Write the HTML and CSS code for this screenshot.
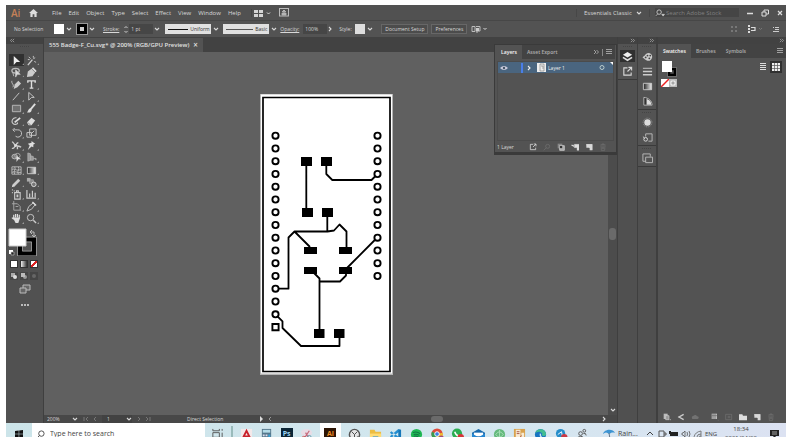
FILE: index.html
```html
<!DOCTYPE html>
<html lang="en">
<head>
<meta charset="utf-8">
<title>555 Badge-F_Cu.svg</title>
<link rel="stylesheet" href="styles.css">
</head>
<body>
<svg class="defs" aria-hidden="true">
  <symbol id="chev" viewBox="0 0 6 6"><path d="M1 2l2 2 2-2" fill="none" stroke="currentColor" stroke-width="1.1"/></symbol>
  <symbol id="dbl" viewBox="0 0 6 6"><path d="M1 1l2 2-2 2M3.500 1l2 2-2 2" fill="none" stroke="currentColor" stroke-width=".9"/></symbol>
  <symbol id="menu" viewBox="0 0 6 6"><path d="M0 .5h6M0 2.500h6M0 4.500h6" stroke="currentColor" stroke-width=".9"/></symbol>
  <symbol id="export" viewBox="0 0 12 12"><path d="M6 2H2v8h8V7M7 1.500h3.500V5M10.500 1.500L6 6" fill="none" stroke="currentColor" stroke-width="1.200"/></symbol>
  <symbol id="bin" viewBox="0 0 12 12"><path d="M2 3h8M4.500 3V1.500h3V3M3 4l.5 7h5L9 4M5 5v4M7 5v4" fill="none" stroke="currentColor"/></symbol>
  <symbol id="page" viewBox="0 0 12 12"><path d="M2 2h9v9L2 3z" fill="currentColor"/><path d="M2 2h9v9H7V7H2z" fill="currentColor"/></symbol>
</svg>
<div class="app">
  <header class="menubar">
    <span class="logo">Ai</span>
    <button class="home" aria-label="Home"><svg viewBox="0 0 10 9"><path d="M5 0l5 4.500H8.500V9H6V6H4v3H1.500V4.500H0z" fill="#ddd"/></svg></button>
    <nav class="menus"><button>File</button><button>Edit</button><button>Object</button><button>Type</button><button>Select</button><button>Effect</button><button>View</button><button>Window</button><button>Help</button></nav>
    <button class="arrange" aria-label="Arrange documents"><svg viewBox="0 0 18 8"><path d="M0 1h4v3H0zM0 5h4v3H0zM5 1h4v3H5zM5 5h4v3H5z" fill="#d5d5d5"/><path d="M13 3.500l1.500 1.500L16 3.500" fill="none" stroke="#ddd"/></svg></button>
    <button class="gpu" aria-label="GPU preview"><svg viewBox="0 0 10 9"><rect x=".5" y=".5" width="9" height="7.500" fill="none" stroke="#bbb"/><path d="M5 2v5M3 4l2-2 2 2M3 5h4v2H3z" stroke="#ccc" stroke-width=".7" fill="#999"/></svg></button>
    <label class="drop space"><select aria-label="Workspace"><option>Essentials Classic</option></select><svg class="i6"><use href="#chev"/></svg></label>
    <label class="search"><svg viewBox="0 0 10 9"><circle cx="4" cy="3.500" r="2.500" fill="none" stroke="#ccc"/><path d="M2.500 5.500L0 8M7 6h3L8.500 8z" stroke="#ccc" stroke-width=".8" fill="#ccc"/></svg><input type="text" placeholder="Search Adobe Stock" aria-label="Search Adobe Stock"></label>
    <div class="winctl">
      <button aria-label="Minimize"><svg viewBox="0 0 8 8"><path d="M1 4.500h6" stroke="#ddd" stroke-width="1.500"/></svg></button>
      <button aria-label="Restore"><svg viewBox="0 0 8 8"><path d="M1 3h4v4H1zM3 3V1h4.500v4H5" fill="none" stroke="#ddd"/></svg></button>
      <button aria-label="Close"><svg viewBox="0 0 8 8"><path d="M2 2l4 4M6 2L2 6" stroke="#ddd" stroke-width="1.200"/></svg></button>
    </div>
  </header>

  <section class="control">
    <span class="nosel">No Selection</span>
    <button class="sw" aria-label="Fill"><i class="white"></i><svg class="i6"><use href="#chev"/></svg></button>
    <button class="sw strk" aria-label="Stroke colour"><i class="ring"></i><svg class="i6"><use href="#chev"/></svg></button>
    <label class="ul" for="weight">Stroke:</label>
    <span class="weight"><svg viewBox="0 0 6 9"><path d="M1.500 3L3 1.500 4.500 3M1.500 6L3 7.500 4.500 6" fill="none" stroke="#ccc"/></svg><select id="weight" class="dark"><option>1 pt</option></select><svg class="i6"><use href="#chev"/></svg></span>
    <label class="profile"><span class="sample"><b></b><select aria-label="Width profile"><option>Uniform</option></select></span><svg class="i6"><use href="#chev"/></svg></label>
    <label class="profile thin"><span class="sample"><b></b><select aria-label="Brush"><option>Basic</option></select></span><svg class="i6"><use href="#chev"/></svg></label>
    <label class="ul op" for="opacity">Opacity:</label>
    <span class="opacity"><input id="opacity" class="dark" type="text" value="100%"><svg class="i6 side"><use href="#chev"/></svg></span>
    <span class="style">Style:</span>
    <button class="sw sty" aria-label="Graphic style"><i class="pale"></i><svg class="i6"><use href="#chev"/></svg></button>
    <button class="btn first">Document Setup</button>
    <button class="btn">Preferences</button>
    <button class="align" aria-label="Align to"><svg viewBox="0 0 17 9"><path d="M1 1.500h3v5H1zM5 1.500h4V6H5M5 7h2" fill="none" stroke="#bbb"/><path d="M5 3h3v3H5z" fill="#ccc"/><path d="M12.500 3l1.500 1.500L15.500 3" fill="none" stroke="#ddd"/></svg></button>
    <div class="ctlend">
      <svg class="w8" viewBox="0 0 8 8"><path d="M1 1h2v2H1zM5 1h2v2H5zM1 5h2v2H1zM5 5h2v2H5z" fill="#777"/></svg>
      <svg class="w16" viewBox="0 0 16 8"><path d="M1 0h2v2H1zM1 3h2v2H1zM1 6h2v2H1z" fill="#ddd"/><path d="M4 2.500h4v3H4" fill="none" stroke="#ddd" stroke-width="1.200"/><path d="M12 3l1.500 1.500L15 3" fill="none" stroke="#777"/></svg>
      <svg class="w8" viewBox="0 0 8 8"><path d="M1 2.500h1M3 2.500h4M3 4.500h4M1 6.500h6" stroke="#ccc"/></svg>
    </div>
  </section>

  <main class="work">
    <aside class="tools">
      <div class="strip"><svg class="i6"><use href="#dbl"/></svg></div>
      <div class="grip"></div>
      <div class="toolgrid">
        <button class="on" aria-label="Selection"><svg viewBox="0 0 12 12"><path d="M3 1l7 6.500H6L3 11z" fill="#eee"/></svg></button>
        <button aria-label="Magic wand"><svg viewBox="0 0 12 12"><path d="M2 11l5-6" stroke="#ccc" stroke-width="1.500"/><path d="M3 2l2 2M8 1v2M10 3l-2 1M9 7l2 1M2 5h2" stroke="#ccc"/></svg></button>
        <button aria-label="Lasso"><svg viewBox="0 0 12 12"><ellipse cx="5" cy="4" rx="4" ry="2.500" fill="none" stroke="#bbb" stroke-width="1.500"/><path d="M5 3l5 5H7l-2 3zM2 6l1 4" fill="#ddd" stroke="#bbb"/></svg></button>
        <button aria-label="Pen"><svg viewBox="0 0 12 12"><path d="M1 11l1-6 4-3 4 4-3 4z" fill="#ccc"/><path d="M7 1l4 4" stroke="#ddd" stroke-width="2"/></svg></button>
        <button aria-label="Curvature"><svg viewBox="0 0 12 12"><path d="M3 11l1-5 4-4 3 3-4 4z" fill="#ccc"/><path d="M1 2c-1 3 3 4 1 7" fill="none" stroke="#ccc"/></svg></button>
        <button aria-label="Type"><svg viewBox="0 0 12 12"><path d="M2 4V2h8v2M6 2v8M4 10h4" fill="none" stroke="#ddd" stroke-width="1.500"/></svg></button>
        <button aria-label="Line"><svg viewBox="0 0 12 12"><path d="M2 10l7-8" stroke="#ccc"/></svg></button>
        <button aria-label="Direct selection"><svg viewBox="0 0 12 12"><path d="M3 1.500l6 5.500H6l-3 3z" fill="none" stroke="#ccc"/></svg></button>
        <button aria-label="Rectangle"><svg viewBox="0 0 12 12"><path d="M1.500 2.500h9v7h-9z" fill="#707070" stroke="#bbb"/></svg></button>
        <button aria-label="Paintbrush"><svg viewBox="0 0 12 12"><path d="M10 1L5 7" stroke="#ddd" stroke-width="2"/><path d="M5 6c-3 0-2 3-4 4 2 1 6 0 5-3z" fill="#ddd"/></svg></button>
        <button aria-label="Shaper"><svg viewBox="0 0 12 12"><path d="M6 2C2 1 0 6 2 8s6 1 5-1" fill="none" stroke="#ccc" stroke-width="1.200"/><path d="M4 7l6-5" stroke="#ddd" stroke-width="2"/></svg></button>
        <button aria-label="Eraser"><svg viewBox="0 0 12 12"><path d="M1 7l5-5 4 3-4 5H3z" fill="#ddd"/><path d="M2 7l3 3" stroke="#777"/></svg></button>
        <button aria-label="Rotate"><svg viewBox="0 0 12 12"><path d="M3 2h4a4 4 0 1 1-2 7M4 0L2 2l2 2" fill="none" stroke="#ccc"/></svg></button>
        <button aria-label="Scale"><svg viewBox="0 0 12 12"><path d="M4 1h7v7H4zM1 5h5v5H1zM6 6l3-3" fill="none" stroke="#ccc"/></svg></button>
        <button aria-label="Width"><svg viewBox="0 0 12 12"><path d="M1 2c2 0 2 3 4 4s4 0 6 2M1 9c2 1 3-2 4-3s1-3 3-3M7 6v4" fill="none" stroke="#ccc" stroke-width="1.500"/><circle cx="5" cy="6" r="1.500" fill="#ddd"/></svg></button>
        <button aria-label="Puppet warp"><svg viewBox="0 0 12 12"><path d="M6 1l4 3-2 1v3L6 7l-4 4 2-5-2-2 4-1z" fill="#ddd"/></svg></button>
        <button aria-label="Shape builder"><svg viewBox="0 0 12 12"><ellipse cx="4" cy="5" rx="3" ry="2.500" fill="#777" stroke="#bbb"/><ellipse cx="7" cy="4" rx="3" ry="2.500" fill="none" stroke="#aaa"/><path d="M6 4l5 4H8l-2 3z" fill="#ddd"/></svg></button>
        <button aria-label="Perspective grid"><svg viewBox="0 0 12 12"><path d="M2 1l3 1v7l-3 1zM5 4l3 1v4H5M8 7h3v2" fill="#999" stroke="#bbb" stroke-width=".7"/></svg></button>
        <button aria-label="Mesh"><svg viewBox="0 0 12 12"><path d="M1 2h10v8H1zM1 5c3-2 4 2 10 0M1 8c4-2 5 1 10 0M4 2c2 3-2 4 0 8M8 2c2 3-2 4 0 8" fill="none" stroke="#bbb"/></svg></button>
        <button aria-label="Gradient"><svg viewBox="0 0 12 12"><defs><linearGradient id="gr"><stop stop-color="#222"/><stop offset="1" stop-color="#eee"/></linearGradient></defs><path d="M1.500 2.500h9v7h-9z" fill="url(#gr)" stroke="#ccc"/></svg></button>
        <button aria-label="Eyedropper"><svg viewBox="0 0 12 12"><path d="M2 10l7-7" stroke="#ccc" stroke-width="3"/><path d="M1 11l2-2" stroke="#ddd"/></svg></button>
        <button aria-label="Blend"><svg viewBox="0 0 12 12"><path d="M1 1h4v4H1z" fill="#aaa"/><path d="M4 3h4v4H4z" fill="#888" stroke="#bbb" stroke-width=".6"/><circle cx="8.500" cy="8" r="2.500" fill="#777" stroke="#ddd"/></svg></button>
        <button aria-label="Symbol sprayer"><svg viewBox="0 0 12 12"><path d="M4 4h6v7H4zM6 4V2h2v2M1 1h1M1 4h1M3 2h1" fill="none" stroke="#ccc" stroke-width="1.200"/><path d="M6 6h2v3H6z" fill="#ccc"/></svg></button>
        <button aria-label="Graph"><svg viewBox="0 0 12 12"><path d="M1 1v9h10M4 9V5M7 9V2M10 9V4" fill="none" stroke="#ccc" stroke-width="1.300"/></svg></button>
        <button aria-label="Artboard"><svg viewBox="0 0 12 12"><path d="M3 0v10h8M1 3h6l3 3v4M5 6h3" fill="none" stroke="#aaa"/></svg></button>
        <button aria-label="Slice"><svg viewBox="0 0 12 12"><path d="M1 11l2-5 5-4 2 2-4 5z" fill="none" stroke="#ccc"/><path d="M7 1l4 4" stroke="#ddd" stroke-width="1.500"/></svg></button>
        <button aria-label="Hand"><svg viewBox="0 0 12 12"><path d="M3 6V2M5 5V1M7 5V1M9 6V2M1 5l2 2" stroke="#ddd" stroke-width="1.300"/><path d="M2 5h8L8 11H5z" fill="#ddd"/></svg></button>
        <button aria-label="Zoom"><svg viewBox="0 0 12 12"><circle cx="5" cy="5" r="3.500" fill="none" stroke="#ccc"/><path d="M8 8l3 3" stroke="#ccc" stroke-width="1.500"/></svg></button>
      </div>
      <svg class="fills" viewBox="0 0 30 28"><rect x="12" y="11.500" width="14" height="14" fill="none" stroke="#000" stroke-width="4"/><path d="M9.500 9h19v19h-19zM14.500 14h9v9h-9z" fill="none" stroke="#aaa" stroke-width=".7"/><path d="M1 1h17v17H1z" fill="#fff" stroke="#ccc"/><path d="M22 4h4v4M24 2l-2 2 2 2M24 7l2 2 2-2" fill="none" stroke="#bbb"/><path d="M1 22h4v4H1z" fill="#fff"/><path d="M3 24h3v3H3z" fill="#222" stroke="#ccc" stroke-width=".6"/></svg>
      <div class="modes"><i class="solid"></i><i class="grad"></i><i class="none"></i></div>
      <div class="modes draw"><svg viewBox="0 0 8 8"><path d="M1 1h4v4H1z" fill="#aaa"/><circle cx="5" cy="5" r="2" fill="#ddd"/></svg><svg viewBox="0 0 8 8"><circle cx="5" cy="5" r="2" fill="#999"/><path d="M1 1h4v4H1z" fill="#bbb"/></svg><svg viewBox="0 0 8 8"><circle cx="4" cy="4" r="2" fill="#666"/></svg></div>
      <svg class="screen" viewBox="0 0 12 10"><path d="M4 1h7v5H4z" fill="#666" stroke="#bbb"/><path d="M1 4h6v5H1z" fill="#666" stroke="#bbb"/></svg>
      <div class="dots"><i></i><i></i><i></i></div>
    </aside>

    <section class="doc">
      <div class="tabs"><button class="tab">555 Badge-F_Cu.svg* @ 200% (RGB/GPU Preview) <span>×</span></button></div>
      <div class="canvas">
        <div class="board">
          <svg class="art" viewBox="260 94 133 281">
            <defs><circle id="pin" r="3.100" fill="#fff" stroke="#000" stroke-width="1.900"/></defs>
            <path d="M260 94h133v281H260z" fill="#b5b5b5"/><path d="M261 94.500h131v279H261z" fill="#fff"/>
            <path d="M263 97.500h127v274H263z" fill="#fff" stroke="#000" stroke-width="1.700"/>
            <g fill="none" stroke="#000" stroke-width="1.800" stroke-linejoin="round">
              <path d="M306.300 161v51M326.300 162v12l6 6H371.500l6-6"/>
              <path d="M327.300 212v18.500M275.500 288.700h13V237.500l6-6h33l6.500-1 5.500-6 7 7V250M294.500 231.500L310 247"/>
              <path d="M377.300 237.500L346 269M311 270l8.500 8.500V332M319.500 281.500H340l6-6V270"/>
              <path d="M275.500 314.300l7 7V328l18.500 18H339.500V334"/>
            </g>
            <path d="M301 157h11v9h-11zM321 157h11v9h-11zM302 208h11v9h-11zM322 208h11v9h-11zM304 247h13v7h-13zM339 247h13v7h-13zM304 267h13v7h-13zM339 267h13v7h-13zM314 329h10.500v9h-10.500zM334 329h10.500v9h-10.500z"/>
            <use href="#pin" x="275.500" y="135.700"/><use href="#pin" x="275.500" y="148.500"/><use href="#pin" x="275.500" y="161.200"/><use href="#pin" x="275.500" y="174"/><use href="#pin" x="275.500" y="186.700"/><use href="#pin" x="275.500" y="199.500"/><use href="#pin" x="275.500" y="212.200"/><use href="#pin" x="275.500" y="225"/><use href="#pin" x="275.500" y="237.700"/><use href="#pin" x="275.500" y="250.500"/><use href="#pin" x="275.500" y="263.200"/><use href="#pin" x="275.500" y="276"/><use href="#pin" x="275.500" y="288.700"/><use href="#pin" x="275.500" y="301.500"/><use href="#pin" x="275.500" y="314.300"/>
            <path d="M272.400 324h6.200v6.200h-6.200z" fill="#fff" stroke="#000" stroke-width="1.900"/>
            <use href="#pin" x="377.500" y="135.700"/><use href="#pin" x="377.500" y="148.500"/><use href="#pin" x="377.500" y="161.200"/><use href="#pin" x="377.500" y="174"/><use href="#pin" x="377.500" y="186.700"/><use href="#pin" x="377.500" y="199.500"/><use href="#pin" x="377.500" y="212.200"/><use href="#pin" x="377.500" y="225"/><use href="#pin" x="377.500" y="237.700"/><use href="#pin" x="377.500" y="250.500"/><use href="#pin" x="377.500" y="263.200"/><use href="#pin" x="377.500" y="276"/>
          </svg>
        </div>
        <div class="vscroll"><i></i><svg class="i6"><use href="#chev"/></svg></div>
      </div>
      <footer class="status">
        <label class="drop zoom"><select aria-label="Zoom level"><option>200%</option></select><svg class="i6"><use href="#chev"/></svg></label>
        <svg class="nav" viewBox="0 0 18 6"><path d="M3 1v4M7 1L5 3l2 2M15 1l-2 2 2 2" stroke="#777" fill="none"/></svg>
        <label class="drop num"><select aria-label="Artboard"><option>1</option></select><svg class="i6"><use href="#chev"/></svg></label>
        <svg class="nav" viewBox="0 0 18 6"><path d="M3 1l2 2-2 2M11 1l2 2-2 2M15 1v4" stroke="#777" fill="none"/></svg>
        <span class="current">Direct Selection</span>
        <svg class="play" viewBox="0 0 14 6"><path d="M1 0l3 3-3 3z" fill="#ddd"/><path d="M12 1l-2 2 2 2" stroke="#999" fill="none"/></svg>
        <div class="hscroll"><i></i></div>
        <svg class="i6 side"><use href="#chev"/></svg>
      </footer>

      <section class="layers">
        <div class="ptabs"><button class="act">Layers</button><button>Asset Export</button><span class="ends"><svg class="i6"><use href="#dbl"/></svg><b></b><svg class="i6"><use href="#menu"/></svg></span></div>
        <div class="list"><div class="layer">
          <svg class="eye" viewBox="0 0 8 6"><path d="M0 3q4-4 8 0-4 4-8 0z" fill="#ccd"/><circle cx="4" cy="3" r="1.200" fill="#456"/></svg>
          <b></b><svg class="i6 side"><use href="#chev"/></svg>
          <svg class="thumb" viewBox="0 0 9 9"><path d="M0 0h9v9H0z" fill="#eee"/><path d="M3 1h4v7H3zM4 3h2v3" fill="none" stroke="#888" stroke-width=".7"/></svg>
          <span>Layer 1</span>
          <svg class="target" viewBox="0 0 15 11"><circle cx="4" cy="5.500" r="2" fill="none" stroke="#bcc"/><path d="M12 0h3v3z" fill="#fff"/></svg>
        </div></div>
        <div class="lfoot"><span>1 Layer</span>
          <svg><use href="#export"/></svg>
          <svg class="dim" viewBox="0 0 12 12"><circle cx="7" cy="5" r="3" fill="none" stroke="currentColor"/><path d="M5 7l-4 4" stroke="currentColor"/></svg>
          <svg viewBox="0 0 12 12"><path d="M1 1h7v7H1z" fill="#888"/><path d="M4 4h7v7H4z" fill="#aaa" stroke="#ddd"/><circle cx="6" cy="6" r="2" fill="#333"/></svg>
          <svg viewBox="0 0 12 12"><path d="M0 3h4v3M5 2h7v9H9V7H5z" fill="#ddd" stroke="#ddd" stroke-width=".5"/></svg>
          <svg><use href="#page"/></svg>
          <svg class="dim"><use href="#bin"/></svg>
        </div>
      </section>
    </section>

    <aside class="rail one">
      <div class="strip"><svg class="i6"><use href="#dbl"/></svg></div>
      <div class="group"><div class="grip"></div>
        <button class="on" aria-label="Layers"><svg viewBox="0 0 12 12"><path d="M6 1l5 3-5 3-5-3z" fill="#eee"/><path d="M1 7l5 3 5-3" fill="none" stroke="#ddd" stroke-width="1.800"/></svg></button>
        <button aria-label="Asset Export"><svg><use href="#export"/></svg></button></div>
    </aside>
    <aside class="rail two">
      <div class="strip"><svg class="i6"><use href="#dbl"/></svg></div>
      <div class="group"><div class="grip"></div>
        <button aria-label="Color"><svg viewBox="0 0 12 12"><path d="M3 5C5 0 12 2 11 7s-6 4-8 2-4-1 0-4z" fill="#ccc"/><circle cx="6" cy="5" r="1" fill="#444"/><circle cx="9" cy="5" r="1" fill="#444"/><circle cx="8" cy="8" r="1" fill="#444"/><circle cx="4" cy="7" r="1" fill="#444"/></svg></button>
        <button aria-label="Stroke"><svg viewBox="0 0 12 12"><path d="M1 2.500h10" stroke="#ccc"/><path d="M1 6h10M1 9.500h10" stroke="#ccc" stroke-width="1.500"/></svg></button>
        <button aria-label="Gradient"><svg viewBox="0 0 12 12"><path d="M1.500 2.500h9v7h-9z" fill="url(#gr)" stroke="#ccc"/></svg></button>
        <button aria-label="Transparency"><svg viewBox="0 0 12 12"><path d="M2 1.500v8.500h9C11 5 7 2 2 1.500z" fill="#333" stroke="#bbb"/><path d="M5 3c4 2 5 3 5 6.500H5z" fill="#ddd"/></svg></button></div>
      <div class="group"><div class="grip"></div>
        <button aria-label="Appearance"><svg viewBox="0 0 12 12"><circle cx="6" cy="6" r="3.500" fill="#ddd"/><circle cx="6" cy="6" r="4.800" fill="none" stroke="#999" stroke-dasharray="1 1"/></svg></button>
        <button aria-label="Graphic Styles"><svg viewBox="0 0 12 12"><path d="M4 5V2h7v8H7" fill="none" stroke="#bbb"/><circle cx="4" cy="8" r="2" fill="none" stroke="#ddd"/><path d="M1 5l2 2" stroke="#ddd"/></svg></button></div>
      <div class="group"><div class="grip"></div>
        <button aria-label="Artboards"><svg viewBox="0 0 12 12"><path d="M4 9H1V1h8v3M4 4.500h7.500v6H4z" fill="none" stroke="#bbb"/></svg></button></div>
    </aside>
    <aside class="panel">
      <div class="strip"><svg class="i6"><use href="#dbl"/></svg></div>
      <div class="ptabs"><button class="act">Swatches</button><button>Brushes</button><button>Symbols</button><span class="ends"><svg class="i6"><use href="#menu"/></svg></span></div>
      <div class="swbody">
        <svg class="pair" viewBox="0 0 15 16"><path d="M7 8h6v6H7z" fill="none" stroke="#000" stroke-width="2.500"/><path d="M5.500 6.500h9v9h-9z" fill="none" stroke="#999" stroke-width=".5"/><path d="M0 0h10v11H0z" fill="#fff"/></svg>
        <div class="views"><button aria-label="List view"><svg viewBox="0 0 8 8"><path d="M1 .5h6M1 2.500h6M1 4.500h6M1 6.500h6" stroke="#ddd"/></svg></button><button class="on" aria-label="Grid view"><svg viewBox="0 0 8 8"><path d="M0 0h8v8H0z" fill="#eee"/><path d="M2.500 0v8M5.500 0v8M0 2.500h8M0 5.500h8" stroke="#555" stroke-width=".7"/></svg></button></div>
      </div>
      <svg class="chips" viewBox="0 0 14 7"><path d="M0 0h7v7H0z" fill="#fff"/><path d="M0 7l7-7" stroke="#e22" stroke-width="1.300"/><path d="M7 0h7v7H7z" fill="#bbb"/><path d="M8 3.500h5M10.500 1v5" stroke="#777" stroke-dasharray="1 1"/><circle cx="10.500" cy="3.500" r="2" fill="none" stroke="#eee"/></svg>
      <div class="pfoot">
        <svg viewBox="0 0 12 12"><path d="M1 1h6v8H1z" fill="#bbb"/><path d="M4 4h5v6H4zM10 10h2" fill="#999" stroke="#ccc"/></svg>
        <svg viewBox="0 0 12 12"><path d="M10 2L3 6l7 4M2 6h3" fill="none" stroke="#ccc" stroke-width="2"/></svg>
        <svg class="dim wide" viewBox="0 0 12 12"><path d="M2 9a3 3 0 0 1 2-5 3 3 0 0 1 5 1 2 2 0 0 1 1 4z" fill="currentColor"/></svg>
        <svg viewBox="0 0 12 12"><path d="M1 1h8v8H1z" fill="#bbb"/><path d="M3 1v8M6 1v8M1 4h8M10 11h2" stroke="#666"/></svg>
        <svg class="dim" viewBox="0 0 12 12"><path d="M1 2h9v8H1zM4 5h4M4 7h4" fill="none" stroke="currentColor"/></svg>
        <svg viewBox="0 0 12 12"><path d="M0 2h5l1 2h6v7H0z" fill="#ddd"/></svg>
        <svg><use href="#page"/></svg>
        <svg class="dim"><use href="#bin"/></svg>
      </div>
    </aside>
  </main>

  <footer class="taskbar"><div class="taskrow">
    <button class="start" aria-label="Start"><svg viewBox="0 0 8 8"><path d="M0 1l3.700-.5v3.300H0zM4.200.4L8 0v3.800H4.200zM0 4.300h3.700v3.300L0 7.100zM4.200 4.300H8V8l-3.800-.5z" fill="#111"/></svg></button>
    <label class="find"><svg viewBox="0 0 10 10"><circle cx="6" cy="4" r="3" fill="none" stroke="#444"/><path d="M4 6L1 9" stroke="#444"/></svg><input type="text" placeholder="Type here to search" aria-label="Type here to search"></label>
    <div class="pins">
      <button aria-label="Task view"><svg viewBox="0 0 14 14"><path d="M2 1v2h7V1M2 5h7v5H2zM2 13v-1h7v1M12 1v2M12 5v8" fill="none" stroke="#555"/></svg></button>
      <b class="sep"></b>
      <button aria-label="AutoCAD"><svg viewBox="0 0 14 14"><path d="M1 1h12v12H1z" fill="#f3e9ea"/><path d="M3 11L7 3l4 8M5 9h4" fill="none" stroke="#c8202a" stroke-width="2"/></svg></button>
      <button aria-label="Calculator"><svg viewBox="0 0 14 14"><path d="M2 1h10v13H2z" fill="#55788c"/><path d="M3 2h8v3H3z" fill="#b4dce8"/><path d="M3 7h2v2H3zM6 7h2v2H6zM3 10h2v2H3zM6 10h2v2H6z" fill="#dde"/><path d="M9 7h2v6H9z" fill="#38a4dc"/></svg></button>
      <button aria-label="Photoshop" class="ps">Ps</button>
      <button aria-label="Snip"><svg viewBox="0 0 14 14"><ellipse cx="7" cy="5" rx="6" ry="4" fill="#e8dce5"/><path d="M4 12l6-9M10 12L6 5" stroke="#c7687b" stroke-width="1.300"/><circle cx="4" cy="11" r="2" fill="none" stroke="#c55"/><circle cx="10" cy="10" r="2" fill="none" stroke="#69a"/></svg></button>
      <button aria-label="Illustrator" class="ai"><span>Ai</span></button>
      <button aria-label="Clock"><svg viewBox="0 0 14 14"><circle cx="7" cy="7" r="5.500" fill="#e5e5e5" stroke="#555" stroke-width="1.500"/><path d="M4 4l3 3 3-3M7 7v3" fill="none" stroke="#444"/><path d="M10 9l4 4" stroke="#777" stroke-width="2"/></svg></button>
      <button aria-label="Explorer"><svg viewBox="0 0 14 14"><path d="M1 2h5l1 2h6v9H1z" fill="#edbd41"/><path d="M1 6h12v6H1z" fill="#ffdc75"/><path d="M4 9h6v4H4z" fill="#4599d5"/></svg></button>
      <button aria-label="VS Code"><svg viewBox="0 0 14 14"><path d="M10 1L1 9l1.500 1.500L11 4zM1 5l1.500-1.500L11 10l-1 3z" fill="#248ed1"/><path d="M10 1l3 1v10l-3 1z" fill="#1577b9"/></svg></button>
      <button aria-label="Spotify"><svg viewBox="0 0 14 14"><circle cx="7" cy="7" r="6" fill="#20b954"/><path d="M3 5q4-2 8 1M4 7q3-1 6 1M4 9q3-1 5 1" fill="none" stroke="#174" stroke-width="1.100"/></svg></button>
      <button aria-label="Chrome"><svg viewBox="0 0 14 14"><circle cx="6.500" cy="6.500" r="6" fill="#dd4b3c"/><path d="M6.500 6.500L1 4a6 6 0 0 0 5 8.500z" fill="#369b52"/><path d="M6.500 6.500L6 12.500A6 6 0 0 0 12.500 5z" fill="#efbe31"/><circle cx="6.500" cy="6.500" r="2.500" fill="#3f7de0" stroke="#fff"/><circle cx="11" cy="11" r="3" fill="#a74a7b"/></svg></button>
      <button aria-label="WhatsApp"><svg viewBox="0 0 14 14"><circle cx="6.500" cy="6" r="5.500" fill="#2bae52"/><path d="M4 4q1 4 5 5" stroke="#fff" stroke-width="1.500" fill="none"/><circle cx="10.500" cy="10" r="3.500" fill="#d53639"/></svg></button>
      <button aria-label="Mail"><svg viewBox="0 0 14 14"><path d="M0 5l7-4 7 4v8H0z" fill="#1769ad"/><path d="M2 5h10v4H2z" fill="#fff"/><path d="M0 6l7 4 7-4v7H0z" fill="#2687d1"/></svg></button>
      <button aria-label="Atom"><svg viewBox="0 0 14 14"><circle cx="7" cy="7" r="6" fill="#65ba7d"/><path d="M3 7q4-6 8 0-4 6-8 0M7 2v10" fill="none" stroke="#a9dfb8"/></svg></button>
      <button aria-label="Files"><svg viewBox="0 0 14 14"><path d="M1 1h12v13H1z" fill="#d9a24d"/><path d="M3 2h5v10H3zM9 5h3v8H9z" fill="#f7ead4"/><path d="M4 4h3M4 6h3M9 8l-3 5" stroke="#a54"/></svg></button>
      <button aria-label="Edge"><svg viewBox="0 0 14 14"><circle cx="7" cy="7" r="6" fill="#1674c1"/><path d="M1 6C3-1 13 0 13 7c-1 3-6 2-4-1-3-3-6-2-8 0z" fill="#43bd91"/><path d="M7 6q-1 5 5 5" fill="none" stroke="#cce8f3" stroke-width="1.500"/></svg></button>
      <button aria-label="Messages"><svg viewBox="0 0 14 14"><circle cx="6" cy="6" r="5" fill="#258dca"/><path d="M3 7l4-3 1 5" fill="none" stroke="#fff"/><circle cx="10" cy="10" r="3.500" fill="#c93a46"/></svg></button>
      <button aria-label="People"><svg viewBox="0 0 14 14"><circle cx="6" cy="6" r="2" fill="none" stroke="#555"/><path d="M2 13q0-4 4-4t3 4" fill="none" stroke="#555"/><circle cx="10" cy="3" r="1.500" fill="none" stroke="#555"/><path d="M9 6q3-1 3 2" fill="none" stroke="#555"/></svg></button>
    </div>
    <div class="tray">
      <svg class="rain" viewBox="0 0 12 12"><path d="M0 6C1 1 10 0 12 5 9 4 8 5 6 6 4 4 2 4 0 6z" fill="#3c94d2"/><path d="M6 5l1 6" stroke="#678"/></svg>
      <span class="rtext">Rain...</span>
      <svg viewBox="0 0 10 10"><path d="M2 6l3-3 3 3" fill="none" stroke="#444"/></svg>
      <svg viewBox="0 0 10 10"><path d="M2 2h5v6H2zM7 4h2v2H7" fill="none" stroke="#555"/></svg>
      <svg viewBox="0 0 10 10"><path d="M1 3h8v4H1zM0 2h2v3H0z" fill="#222"/></svg>
      <svg viewBox="0 0 10 10"><path d="M1 4h1l2-2v6L2 6H1zM6 3q1 2 0 4M8 2q2 3 0 6" fill="none" stroke="#555" stroke-width=".8"/></svg>
      <svg viewBox="0 0 10 10"><path d="M1 8q1-5 7-6M4 8q0-3 4-3M6 8q0-1 2-1M8 2v6" fill="none" stroke="#666" stroke-width=".8"/></svg>
      <span class="lang">ENG</span>
      <span class="clock">18:34<br>2021/04/20</span>
      <button aria-label="Notifications"><svg viewBox="0 0 10 10"><path d="M1 1h9v6H7L5.500 9 4 7H1z" fill="#222"/><path d="M3 3h5M3 5h5" stroke="#ddd" stroke-width=".7"/></svg></button>
    </div>
  </div></footer>
</div>
</body>
</html>
```
FILE: styles.css
```css
* { box-sizing: border-box; }
body { margin: 0; background: #fff; color: #d8d8d8; font: 5px/8px "Open Sans", "Noto Sans", sans-serif; }
button, input, select { font: inherit; color: inherit; background: none; border: 0; padding: 0; margin: 0; border-radius: 0; }
select { appearance: none; }
button { display: flex; align-items: center; justify-content: center; white-space: nowrap; }
svg { display: block; flex: none; width: 12px; height: 12px; }
.defs { display: none; }
.i6 { width: 6px; height: 6px; }
.side { transform: rotate(-90deg); }
.app { height: 100vh; padding: 5px 0 0 6px; display: flex; flex-direction: column; overflow: hidden; }

.menubar { flex: none; height: 15px; background: #515151; display: flex; align-items: center; font-size: 6px; }
.logo { width: 23px; padding-left: 5px; color: #c58158; font-size: 10px; font-weight: 600; }
.home svg { width: 9px; height: 8px; }
.menus { display: flex; gap: 7px; padding: 0 10px 0 14px; }
.arrange { border-left: 1px solid #454545; padding-left: 2px; }
.arrange svg { width: 18px; height: 8px; }
.gpu { margin-left: 7px; }
.gpu svg { width: 10px; height: 9px; }
.drop { display: flex; align-items: center; justify-content: space-between; }
.space { margin-left: auto; gap: 4px; padding: 0 7px; border: solid #474747; border-width: 0 1px; }
.search { display: flex; align-items: center; gap: 1px; width: 84px; height: 9px; margin: 0 7px 0 5px; background: #454545; }
.search svg { width: 10px; height: 8px; }
.search input { flex: 1; min-width: 0; }
.search input::placeholder { color: #808080; }
.winctl { display: flex; gap: 7px; padding-right: 2px; }
.winctl svg { width: 8px; height: 8px; }

.control { flex: none; height: 17px; background: #535353; border-top: 1px solid #474747; display: flex; align-items: center; }
.nosel { width: 48px; padding-left: 8px; }
.sw { justify-content: flex-start; gap: 2px; width: 23px; }
.sw i { width: 10px; height: 10px; }
.white { background: #fff; }
.pale { background: #ddd; }
.ring { border: 3px solid #000; outline: 1px solid #999; background: #ccc; }
.strk { width: 26px; }
.ul { text-decoration: underline; }
.weight { display: flex; align-items: center; margin-left: 4px; }
.weight > svg:first-child { width: 6px; height: 9px; }
.dark { background: #464646; height: 10px; padding: 0 2px; }
.weight .dark { width: 24px; margin-right: 1px; }
.profile { display: flex; align-items: center; gap: 2px; width: 58px; margin-left: 5px; }
.profile.thin { margin-left: 0; width: 57px; }
.sample { display: flex; align-items: center; justify-content: space-between; width: 46px; height: 10px; padding: 0 1px 0 3px; background: #e0e0e0; color: #333; }
.sample b { flex: 1; height: 1px; margin-right: 2px; background: #111; }
.thin b { background: #555; }
.opacity { display: flex; align-items: center; margin: 0 6px 0 4px; }
.opacity .dark { width: 24px; }
.style { width: 16px; }
.btn { height: 10px; padding: 0 3px; margin-right: 3px; border: 1px solid #676767; background: #4c4c4c; }
.btn.first { margin-left: 3px; }
.align { margin-left: 1px; }
.align svg { width: 17px; height: 9px; }
.ctlend { margin-left: auto; display: flex; align-items: center; gap: 9px; padding-right: 6px; }
.w8 { width: 8px; height: 8px; }
.w16 { width: 16px; height: 8px; }

.work { flex: 1; min-height: 0; display: flex; background: #3f3f3f; }
.strip { height: 7px; background: #424242; display: flex; align-items: center; padding: 0 2px; color: #aaa; }
.strip .i6 { width: 5px; height: 5px; }
.grip { width: 10px; height: 1px; margin: 2px auto 3px; background: repeating-linear-gradient(90deg, #444 0 1px, #535353 1px 2px); }

.tools { flex: none; width: 37px; background: #515151; display: flex; flex-direction: column; align-items: center; }
.tools .strip { width: 100%; }
.tools .strip svg { transform: scaleX(-1); margin-left: 2px; }
.tools .grip { margin: 2px 0 7px; }
.toolgrid { display: grid; grid-template-columns: 15px 15px; grid-auto-rows: 1fr; height: 171px; margin-right: 1px; }
.toolgrid button { position: relative; }
.toolgrid svg { width: 11px; height: 11px; }
.toolgrid button::after { content: ""; position: absolute; right: 0; bottom: 1px; width: 2px; height: 2px; background: #999; clip-path: polygon(100% 0, 100% 100%, 0 100%); }
.on { background: #303030; }
.fills { width: 30px; height: 28px; margin: 3px 3px 0 0; }
.modes { display: flex; gap: 2px; margin: 4px 2px 0 0; }
.modes i { width: 8px; height: 8px; border: 1px solid #333; }
.solid { background: #fff; }
.grad { background: linear-gradient(90deg, #eee, #333); }
.none { background: linear-gradient(135deg, #fff 38%, #d22 38% 62%, #fff 62%); }
.draw svg { width: 8px; height: 8px; background: #454545; }
.screen { width: 12px; height: 10px; margin-top: 4px; }
.dots { display: flex; gap: 1px; margin-top: 10px; }
.dots i { width: 2px; height: 2px; background: #bbb; }

.doc { flex: 1; min-width: 0; margin-left: 1px; display: flex; flex-direction: column; position: relative; }
.tabs { flex: none; height: 15px; padding-top: 1px; background: #424242; display: flex; }
.tab { padding: 0 5px; background: #535353; font-size: 6px; font-weight: 600; color: #e2e2e2; gap: 4px; }
.tab span { font-size: 8px; }
.canvas { flex: 1; min-height: 0; display: flex; background: #606060; }
.board { flex: 1; display: grid; place-items: center; padding-top: 2px; }
.art { width: 133px; height: 281px; }
.vscroll { width: 9px; background: #4c4c4c; display: flex; flex-direction: column; align-items: center; justify-content: flex-end; padding: 8px 0 2px; }
.vscroll i { width: 7px; height: 12px; margin: auto 0; background: #6a6a6a; border-radius: 3px; }
.status { flex: none; height: 8px; background: #484848; display: flex; align-items: center; }
.zoom { width: 34px; padding-left: 3px; }
.num { width: 30px; padding-left: 5px; background: #424242; }
.nav { width: 18px; height: 6px; margin: 0 3px; }
.current { margin-left: 31px; }
.play { width: 14px; height: 6px; margin-left: 36px; }
.hscroll { flex: 1; display: flex; justify-content: center; }
.hscroll i { width: 12px; height: 6px; background: #6a6a6a; border-radius: 3px; }
.status > .side { margin-right: 10px; }

.layers { position: absolute; top: 7px; right: 0; width: 123px; height: 111px; padding: 0 1px; background: #535353; border: solid #3a3a3a; border-width: 1px 1px 3px; display: flex; flex-direction: column; }
.ptabs { flex: none; height: 14px; background: #434343; display: flex; color: #aaa; font-family: "Noto Sans", sans-serif; }
.ptabs button { padding: 0 5px; font-weight: 600; }
.ptabs .act { background: #535353; color: #f0f0f0; }
.ends { margin-left: auto; display: flex; align-items: center; gap: 3px; padding-right: 3px; color: #aaa; }
.ends b { width: 1px; height: 7px; background: #888; }
.list { flex: 1; margin: 2px 1px 0; border: 1px solid #4b4b4b; }
.layer { height: 11px; background: #4a657f; display: flex; align-items: center; color: #f0f0f0; }
.layer .eye { width: 8px; height: 6px; margin: 0 13px 0 2px; }
.layer b { width: 2px; height: 10px; background: #4a7ee8; margin-right: 3px; }
.thumb { width: 9px; height: 9px; margin: 0 2px 0 5px; }
.target { width: 15px; height: 11px; margin-left: auto; }
.lfoot { flex: none; height: 11px; display: flex; align-items: center; gap: 6px; padding-left: 1px; }
.lfoot span { width: 26px; }
.lfoot svg { width: 8px; height: 8px; }
.dim { color: #727272; }

.rail { flex: none; background: #505050; display: flex; flex-direction: column; border-left: 1px solid #3f3f3f; }
.rail .strip { justify-content: flex-end; }
.one { width: 20px; }
.two { width: 19px; }
.group { background: #535353; padding: 0 2px 2px; border-bottom: 1px solid #3a3a3a; }
.group .grip { margin-top: 0; border-top: 0; }
.group { padding-top: 2px; }
.group button { width: 100%; height: 12px; margin-bottom: 3px; }
.group button:last-child { margin-bottom: 0; }
.group svg { width: 11px; height: 11px; }

.panel { flex: none; width: 128px; margin-left: 2px; background: #535353; display: flex; flex-direction: column; }
.panel .strip { justify-content: flex-end; }
.swbody { display: flex; justify-content: space-between; padding: 3px 4px 1px 4px; }
.pair { width: 15px; height: 16px; }
.views { display: flex; gap: 1px; }
.views button { width: 12px; height: 12px; }
.views svg { width: 8px; height: 8px; }
.chips { width: 16px; height: 8px; margin: 1px 0 0 3px; }
.pfoot { margin-top: auto; padding: 0 0 2px 5px; display: flex; gap: 6px; }
.pfoot svg { width: 8px; height: 8px; }
.pfoot .wide { margin-right: 6px; }

.taskbar { flex: none; height: 14px; overflow: hidden; color: #444; }
.taskrow { height: 22px; display: flex; align-items: center; background: linear-gradient(90deg, #cce4e9, #d3e7ef 60%, #dce2f2); }
.start { width: 26px; }
.start svg { width: 8px; height: 8px; }
.find { display: flex; align-items: center; gap: 5px; width: 173px; height: 22px; padding-left: 4px; background: #fff; font-size: 7px; line-height: 12px; }
.find svg { width: 9px; height: 9px; }
.find input { flex: 1; min-width: 0; height: 12px; }
.find input::placeholder { color: #444; }
.pins { flex: 1; max-width: 384px; display: flex; align-items: center; justify-content: space-between; padding-left: 5px; }
.pins button { width: 14px; height: 22px; }
.pins svg { width: 13px; height: 13px; }
.sep { width: 2px; height: 16px; background: #9bb; }
.ps, .ai span { font-size: 7px; font-weight: 700; color: #9bd5f5; }
.pins .ps { height: 12px; width: 12px; background: #0b2536; }
.pins .ai { width: 21px; background: #fff; }
.ai span { width: 12px; height: 12px; line-height: 12px; background: #2c1404; color: #f08c22; }
.tray { flex: none; margin-left: auto; display: flex; align-items: center; gap: 2px; }
.tray svg { width: 10px; height: 10px; }
.tray .rain { width: 12px; height: 12px; }
.rtext { width: 26px; padding-left: 1px; font-size: 7px; }
.lang { width: 15px; font-size: 6px; }
.clock { width: 38px; text-align: center; font-size: 6px; line-height: 9px; margin-bottom: 1px; }
.tray button { width: 24px; }
```
